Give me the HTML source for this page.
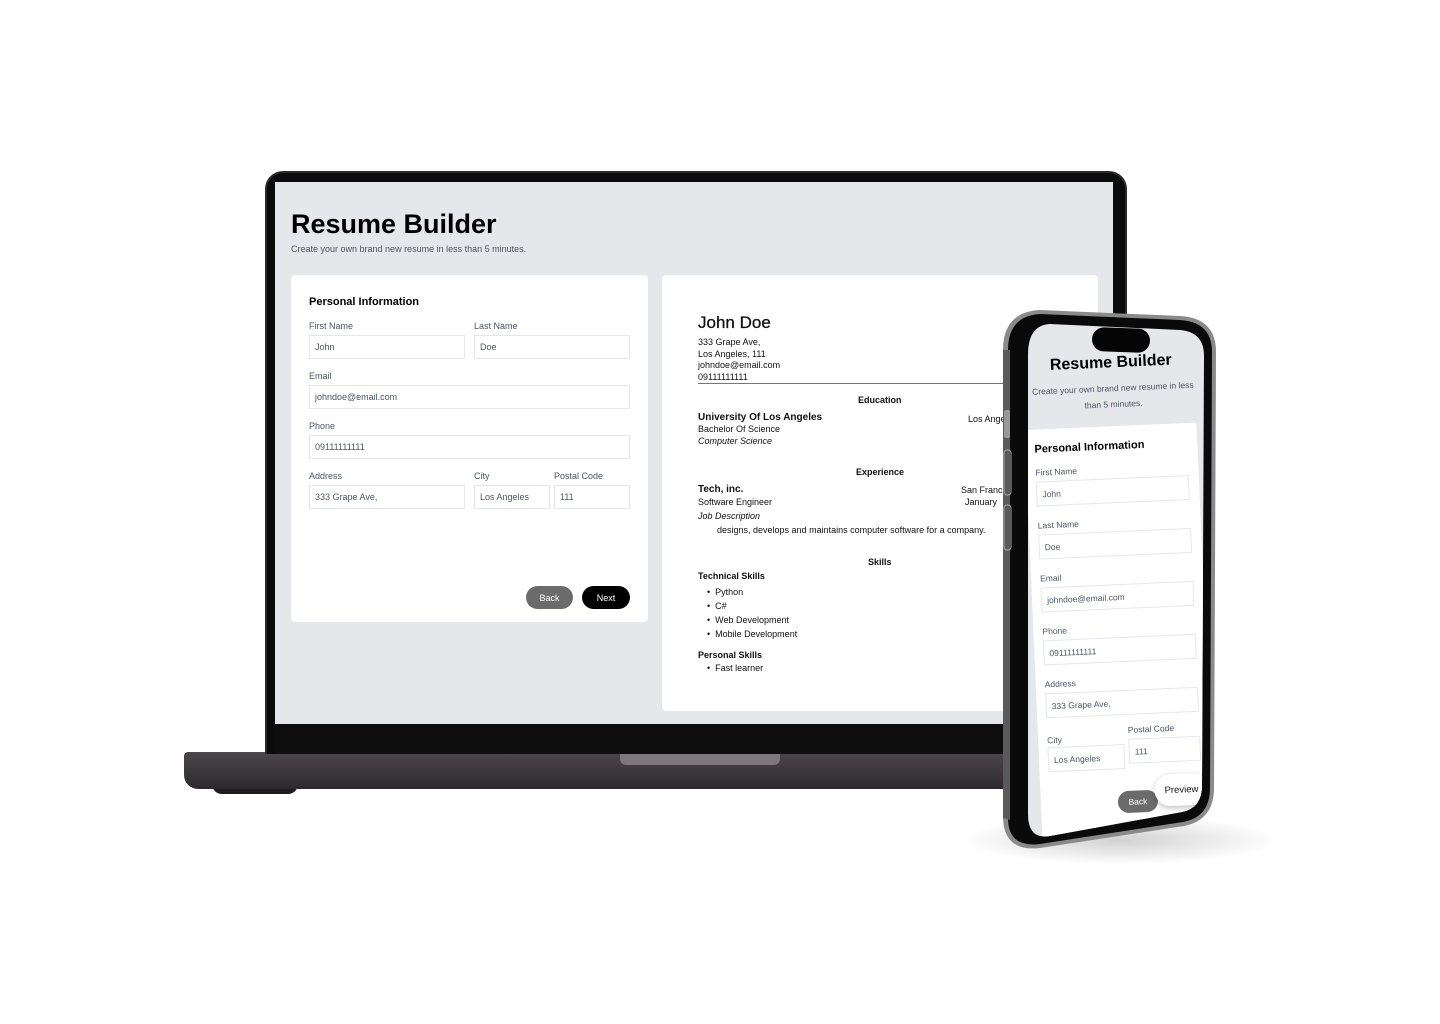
<!DOCTYPE html>
<html><head><meta charset="utf-8"><style>
*{margin:0;padding:0;box-sizing:border-box}
body{width:1440px;height:1024px;background:#fff;position:relative;overflow:hidden;font-family:"Liberation Sans",sans-serif;color:#111}
.a{position:absolute}
.lbl{position:absolute;font-size:9px;color:#4b5563}
.inp{position:absolute;border:1px solid #e5e7eb;background:#fff;font-size:9px;color:#4b5563;padding-left:5px;display:flex;align-items:center}
.r{position:absolute;font-size:9px;color:#111;white-space:nowrap}
.b{font-weight:bold}
.i{font-style:italic}
</style></head><body>

<!-- laptop base -->
<div class="a" style="left:212px;top:784px;width:86px;height:10px;background:#1e1c1e;border-radius:0 0 12px 12px"></div>
<div class="a" style="left:184px;top:752px;width:1030px;height:37px;background:linear-gradient(#4a464a,#3a363a 60%,#2c292c);border-radius:4px 4px 14px 14px"></div>
<div class="a" style="left:620px;top:752px;width:160px;height:13px;background:#7b777c;border-radius:0 0 6px 6px"></div>
<!-- laptop lid -->
<div class="a" style="left:265px;top:171px;width:862px;height:583px;background:#0b0b0b;border-radius:18px 18px 0 0;border:2px solid #2a2a2a;border-bottom:none"></div>
<div class="a" style="left:275px;top:182px;width:838px;height:542px;background:#e5e7eb;overflow:hidden">
  <div class="a b" style="left:16px;top:27px;font-size:27px;color:#000">Resume Builder</div>
  <div class="a" style="left:16px;top:62px;font-size:9px;color:#4b5563">Create your own brand new resume in less than 5 minutes.</div>
  <div class="a" style="left:16px;top:93px;width:357px;height:347px;background:#fff;border-radius:4px">
    <div class="a b" style="left:18px;top:21px;font-size:11px;color:#000">Personal Information</div>
    <div class="lbl" style="left:18px;top:46px">First Name</div>
    <div class="lbl" style="left:183px;top:46px">Last Name</div>
    <div class="inp" style="left:18px;top:60px;width:156px;height:24px">John</div>
    <div class="inp" style="left:183px;top:60px;width:156px;height:24px">Doe</div>
    <div class="lbl" style="left:18px;top:96px">Email</div>
    <div class="inp" style="left:18px;top:110px;width:321px;height:24px">johndoe@email.com</div>
    <div class="lbl" style="left:18px;top:146px">Phone</div>
    <div class="inp" style="left:18px;top:160px;width:321px;height:24px">09111111111</div>
    <div class="lbl" style="left:18px;top:196px">Address</div>
    <div class="lbl" style="left:183px;top:196px">City</div>
    <div class="lbl" style="left:263px;top:196px">Postal Code</div>
    <div class="inp" style="left:18px;top:210px;width:156px;height:24px">333 Grape Ave,</div>
    <div class="inp" style="left:183px;top:210px;width:76px;height:24px">Los Angeles</div>
    <div class="inp" style="left:263px;top:210px;width:76px;height:24px">111</div>
    <div class="a" style="left:235px;top:311px;width:47px;height:23px;border-radius:12px;background:#6b6b6b;color:#fff;font-size:9px;display:flex;align-items:center;justify-content:center">Back</div>
    <div class="a" style="left:291px;top:311px;width:48px;height:23px;border-radius:12px;background:#000;color:#fff;font-size:9px;display:flex;align-items:center;justify-content:center">Next</div>
  </div>
  <div class="a" style="left:387px;top:93px;width:436px;height:436px;background:#fff;border-radius:4px">
    <div class="r" style="left:36px;top:38px;font-size:17px;-webkit-text-stroke:0.3px #111">John Doe</div>
    <div class="r" style="left:36px;top:62px;line-height:11.6px">333 Grape Ave,<br>Los Angeles, 111<br>johndoe@email.com<br>09111111111</div>
    <div class="a" style="left:36px;top:108px;width:380px;height:1px;background:#777"></div>
    <div class="r b" style="left:196px;top:120px">Education</div>
    <div class="r b" style="left:36px;top:137px;font-size:10px">University Of Los Angeles</div>
    <div class="r" style="left:306px;top:139px">Los Angeles</div>
    <div class="r" style="left:36px;top:149px">Bachelor Of Science</div>
    <div class="r i" style="left:36px;top:161px">Computer Science</div>
    <div class="r b" style="left:194px;top:192px">Experience</div>
    <div class="r b" style="left:36px;top:209px;font-size:10px">Tech, inc.</div>
    <div class="r" style="left:299px;top:210px">San Francisco</div>
    <div class="r" style="left:36px;top:222px">Software Engineer</div>
    <div class="r" style="left:303px;top:222px">January</div>
    <div class="r i" style="left:36px;top:236px">Job Description</div>
    <div class="r" style="left:55px;top:250px">designs, develops and maintains computer software for a company.</div>
    <div class="r b" style="left:206px;top:282px">Skills</div>
    <div class="r b" style="left:36px;top:296px">Technical Skills</div>
    <div class="r" style="left:45px;top:310px;line-height:14px">•&nbsp;&nbsp;Python<br>•&nbsp;&nbsp;C#<br>•&nbsp;&nbsp;Web Development<br>•&nbsp;&nbsp;Mobile Development</div>
    <div class="r b" style="left:36px;top:375px">Personal Skills</div>
    <div class="r" style="left:45px;top:388px">•&nbsp;&nbsp;Fast learner</div>
  </div>
</div>
<div class="a" style="left:275px;top:724px;width:838px;height:30px;background:#0e0e0e"></div>

<!-- phone shadow -->
<div class="a" style="left:960px;top:815px;width:320px;height:50px;border-radius:50%;background:radial-gradient(ellipse,rgba(0,0,0,.18),rgba(0,0,0,0) 70%)"></div>

<!-- phone frame -->
<svg class="a" style="left:0;top:0" width="1440" height="1024">
  <path d="M1003 350 Q1003 312 1040 310 L1180 316 Q1216 318 1216 352 L1214 788 Q1214 820 1184 826 L1040 848 Q1004 852 1003 818 Z" fill="#8a8a8a"/>
  <path d="M1008 350 Q1008 316 1040 314 L1180 320 Q1212 322 1212 352 L1210 788 Q1210 817 1183 822 L1040 844 Q1008 848 1008 818 Z" fill="#0a0a0a"/>
  <path d="M1003 350 L1010 350 L1010 820 L1003 818 Z" fill="#5a5a5a"/>
  <rect x="1004" y="410" width="6" height="28" rx="2" fill="#999"/>
  <rect x="1004" y="450" width="7" height="45" rx="3" fill="none" stroke="#aaa"/>
  <rect x="1004" y="505" width="7" height="45" rx="3" fill="none" stroke="#aaa"/>
</svg>
<div class="a" style="left:0;top:0;width:1440px;height:1024px;clip-path:path('M1028 355 Q1028 325 1050 324 L1180 330 Q1204 332 1204 356 L1202 785 Q1202 808 1182 812 L1050 836 Q1028 840 1028 814 Z');background:#e5e7eb">
  <div class="a" style="left:1027px;top:320px;width:190px;height:530px;transform:rotate(-2.5deg);transform-origin:95px 300px">
    <div class="a b" style="left:0;width:190px;text-align:center;top:34px;font-size:16px;color:#000">Resume Builder</div>
    <div class="a" style="left:8px;width:176px;text-align:center;top:60px;font-size:8.5px;line-height:16px;color:#4b5563">Create your own brand new resume in less than 5 minutes.</div>
    <div class="a" style="left:6px;top:106px;width:172px;height:440px;background:#fff;border-radius:3px">
      <div class="a b" style="left:9px;top:14px;font-size:11px;color:#000">Personal Information</div>
      <div class="lbl" style="left:9px;top:38px;font-size:8.5px">First Name</div>
      <div class="inp" style="left:9px;top:52px;width:153px;height:25px;font-size:8.5px">John</div>
      <div class="lbl" style="left:9px;top:91px;font-size:8.5px">Last Name</div>
      <div class="inp" style="left:9px;top:105px;width:153px;height:25px;font-size:8.5px">Doe</div>
      <div class="lbl" style="left:9px;top:144px;font-size:8.5px">Email</div>
      <div class="inp" style="left:9px;top:158px;width:153px;height:25px;font-size:8.5px">johndoe@email.com</div>
      <div class="lbl" style="left:9px;top:197px;font-size:8.5px">Phone</div>
      <div class="inp" style="left:9px;top:211px;width:153px;height:25px;font-size:8.5px">09111111111</div>
      <div class="lbl" style="left:9px;top:250px;font-size:8.5px">Address</div>
      <div class="inp" style="left:9px;top:264px;width:153px;height:25px;font-size:8.5px">333 Grape Ave,</div>
      <div class="lbl" style="left:9px;top:306px;font-size:8.5px">City</div>
      <div class="lbl" style="left:90px;top:299px;font-size:8.5px">Postal Code</div>
      <div class="inp" style="left:9px;top:318px;width:77px;height:25px;font-size:8.5px">Los Angeles</div>
      <div class="inp" style="left:90px;top:313px;width:72px;height:25px;font-size:8.5px">111</div>
      <div class="a" style="left:77px;top:365px;width:40px;height:22px;border-radius:11px;background:#6b6b6b;color:#fff;font-size:8.5px;display:flex;align-items:center;justify-content:center">Back</div>
      <div class="a" style="left:114px;top:350px;width:54px;height:32px;border-radius:16px;background:#fff;box-shadow:0 2px 6px rgba(0,0,0,.25);color:#111;font-size:9.5px;display:flex;align-items:center;justify-content:center">Preview</div>
    </div>
  </div>
</div>
<div class="a" style="left:1092px;top:328px;width:58px;height:24px;border-radius:12px;background:#050505;transform:rotate(2deg)"></div>
</body></html>
